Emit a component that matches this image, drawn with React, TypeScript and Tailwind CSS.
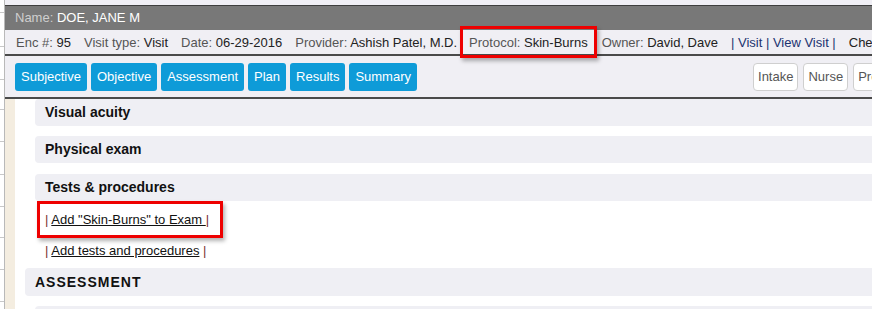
import React from "react";

const F = { fontFamily: '"Liberation Sans", Arial, sans-serif' };

function LeftStrip() {
  const rows = [13, 34, 33, 30, 32, 33, 32, 31, 32, 32, 20];
  return (
    <div className="w-[4px] shrink-0 bg-white flex flex-col">
      {rows.map((h, i) => (
        <div key={i} className="border-b border-[#c8c8c8] shrink-0" style={{ height: h }} />
      ))}
    </div>
  );
}

function BlueBtn({ children }: { children: React.ReactNode }) {
  return (
    <div className="h-[28px] shrink-0 px-[6px] flex items-center rounded-[3px] bg-[#0e9bd8] text-white text-[13px]">
      {children}
    </div>
  );
}

function WhiteBtn({ children }: { children: React.ReactNode }) {
  return (
    <div className="h-[28px] shrink-0 px-[4px] flex items-center rounded-[4px] bg-white border border-[#cfcfcf] text-[#555] text-[13px]">
      {children}
    </div>
  );
}

function Panel({ children, indent = "ml-[20px]" }: { children: React.ReactNode; indent?: string }) {
  return (
    <div className={`${indent} h-[27px] shrink-0 flex items-center pl-[10px] bg-[#efeff4] rounded-l-[4px] text-[14px] font-bold text-[#111]`}>
      {children}
    </div>
  );
}

function Item({ label, value, cls = "" }: { label: string; value: string; cls?: string }) {
  return (
    <span className={`whitespace-nowrap ${cls}`}>
      <span className="text-[#555]">{label} </span>
      <span className="text-[#222]">{value}</span>
    </span>
  );
}

export default function App() {
  return (
    <div style={F} className="w-[872px] h-[309px] overflow-hidden flex bg-white">
      <LeftStrip />
      <div className="w-px shrink-0 bg-[#b9b9b9]" />
      <div className="flex-1 min-w-0 flex flex-col overflow-hidden">
        <div className="h-[5px] bg-[#f0eff5] shrink-0" />
        <div className="h-px bg-[#3e3e3e] shrink-0" />
        <div className="h-[24px] bg-[#787878] shrink-0 flex items-center pl-[10px] text-[13px] whitespace-nowrap">
          <span className="text-[#cfcfcf]">Name:&nbsp;</span>
          <span className="text-white">DOE, JANE M</span>
        </div>
        <div className="h-[26px] bg-[#f0eff4] shrink-0 flex items-center pt-[2px] pl-[11px] text-[13px] whitespace-nowrap border-b-[2px] border-[#4a4a4a]">
          <Item label="Enc #:" value="95" />
          <Item label="Visit type:" value="Visit" cls="ml-[13px]" />
          <Item label="Date:" value="06-29-2016" cls="ml-[13px]" />
          <Item label="Provider:" value="Ashish Patel, M.D." cls="ml-[13px]" />
          <span className="relative ml-[12px]">
            <Item label="Protocol:" value="Skin-Burns" />
            <span className="absolute left-[-9px] right-[-9px] top-[-7px] bottom-[-5px] border-[3px] border-[#ee0000] shadow-[2px_3px_4px_rgba(0,0,0,0.3)]" />
          </span>
          <Item label="Owner:" value="David, Dave" cls="ml-[14px]" />
          <span className="ml-[13px] text-[#1c3370]">| Visit | View Visit |</span>
          <span className="ml-[13px] text-[#222]">Chec</span>
        </div>
        <div className="h-[43px] bg-[#f0eff4] shrink-0 flex items-start pt-[7px] pl-[10px] border-b-[2px] border-[#4a4a4a]">
          <div className="flex gap-[4px] shrink-0">
            <BlueBtn>Subjective</BlueBtn>
            <BlueBtn>Objective</BlueBtn>
            <BlueBtn>Assessment</BlueBtn>
            <BlueBtn>Plan</BlueBtn>
            <BlueBtn>Results</BlueBtn>
            <BlueBtn>Summary</BlueBtn>
          </div>
          <div className="ml-[336px] flex gap-[5px] shrink-0">
            <WhiteBtn>Intake</WhiteBtn>
            <WhiteBtn>Nurse</WhiteBtn>
            <WhiteBtn>Provider</WhiteBtn>
          </div>
        </div>
        <div className="flex-1 flex min-h-0">
          <div className="w-[10px] shrink-0 bg-[#f4ede0]" />
          <div className="flex-1 min-w-0 flex flex-col">
            <Panel>Visual acuity</Panel>
            <div className="h-[10px] shrink-0" />
            <Panel>Physical exam</Panel>
            <div className="h-[11px] shrink-0" />
            <Panel>Tests &amp; procedures</Panel>
            <div className="ml-[30px] pt-[11px] text-[13px] leading-[15px] shrink-0">
              <div className="flex">
                <span className="relative whitespace-nowrap">
                  <span className="text-[#7a2f2f]">| </span>
                  <span className="underline text-[#111]">Add "Skin-Burns" to Exam </span>
                  <span className="text-[#7a2f2f]">|</span>
                  <span className="absolute left-[-8px] right-[-14px] top-[-11px] bottom-[-11px] border-[3px] border-[#ee0000] shadow-[2px_3px_4px_rgba(0,0,0,0.3)]" />
                </span>
              </div>
              <div className="mt-[16px] whitespace-nowrap">
                <span className="text-[#7a2f2f]">| </span>
                <span className="underline text-[#111]">Add tests and procedures</span>
                <span className="text-[#7a2f2f]"> |</span>
              </div>
            </div>
            <div className="h-[10px] shrink-0" />
            <div className="ml-[10px] h-[28px] shrink-0 flex items-center pl-[10px] bg-[#efeff4] rounded-l-[4px] text-[14px] font-bold text-[#111] tracking-[1px]">
              ASSESSMENT
            </div>
            <div className="h-[10px] shrink-0" />
            <Panel>&nbsp;</Panel>
          </div>
        </div>
      </div>
    </div>
  );
}
